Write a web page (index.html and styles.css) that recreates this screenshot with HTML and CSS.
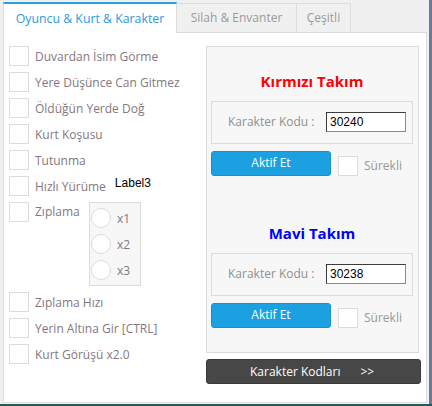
FILE: index.html
```html
<!DOCTYPE html>
<html lang="tr">
<head>
<meta charset="utf-8">
<link rel="stylesheet" href="styles.css">
</head>
<body>
<div class="window">
  <div class="tabs">
    <div class="tab active">Oyuncu &amp; Kurt &amp; Karakter</div>
    <div class="tab t2">Silah &amp; Envanter</div>
    <div class="tab t3">Çeşitli</div>
  </div>
  <div class="panel">
    <div class="left">
      <div class="row"><span class="cb"></span><span class="lbl">Duvardan İsim Görme</span></div>
      <div class="row"><span class="cb"></span><span class="lbl">Yere Düşünce Can Gitmez</span></div>
      <div class="row"><span class="cb"></span><span class="lbl">Öldüğün Yerde Doğ</span></div>
      <div class="row"><span class="cb"></span><span class="lbl">Kurt Koşusu</span></div>
      <div class="row"><span class="cb"></span><span class="lbl">Tutunma</span></div>
      <div class="row"><span class="cb"></span><span class="lbl">Hızlı Yürüme</span><span class="label3">Label3</span></div>
      <div class="row top">
        <span class="cb"></span><span class="lbl zip">Zıplama</span>
        <div class="radios">
          <div class="radio-row"><span class="rb"></span><span class="rl">x1</span></div>
          <div class="radio-row"><span class="rb"></span><span class="rl">x2</span></div>
          <div class="radio-row"><span class="rb"></span><span class="rl">x3</span></div>
        </div>
      </div>
      <div class="row"><span class="cb"></span><span class="lbl">Zıplama Hızı</span></div>
      <div class="row"><span class="cb"></span><span class="lbl">Yerin Altına Gir [CTRL]</span></div>
      <div class="row"><span class="cb"></span><span class="lbl">Kurt Görüşü x2.0</span></div>
    </div>
    <div class="right">
      <div class="teams">
        <div class="title red">Kırmızı Takım</div>
        <div class="code-box"><span class="code-lbl">Karakter Kodu :</span><span class="input">30240</span></div>
        <div class="act-row"><span class="btn">Aktif Et</span><span class="cb small"></span><span class="lbl">Sürekli</span></div>
        <div class="title blue second">Mavi Takım</div>
        <div class="code-box"><span class="code-lbl">Karakter Kodu :</span><span class="input">30238</span></div>
        <div class="act-row"><span class="btn">Aktif Et</span><span class="cb small"></span><span class="lbl">Sürekli</span></div>
      </div>
      <div class="dark-btn"><span>Karakter Kodları</span><span class="arr">&gt;&gt;</span></div>
    </div>
  </div>
</div>
</body>
</html>
```

FILE: styles.css
```css
* { box-sizing: border-box; }
html, body { margin: 0; padding: 0; }
body {
  background: #2a5858;
  font-family: "Open Sans", "DejaVu Sans", sans-serif;
  width: 432px;
  height: 406px;
  overflow: hidden;
}
.window {
  width: 432px;
  height: 404px;
  background: #f0f0f0;
  border-right: 3px solid #6b7a98;
  padding: 2px 0 0 3px;
}
.tabs {
  display: flex;
  align-items: flex-end;
  height: 30px;
}
.tab {
  height: 29px;
  display: flex;
  align-items: center;
  justify-content: center;
  font-size: 12px;
  color: #9a9a9a;
  background: #f0f0f0;
  border: 1px solid #dcdcdc;
  border-bottom: none;
  padding-bottom: 1px;
}
.tab.active {
  width: 174px;
  height: 31px;
  margin-bottom: -1px;
  background: #fff;
  color: #2a9be0;
  font-size: 12.3px;
  border: 1px solid #dcdcdc;
  border-top: 2px solid #2a9fe0;
  border-bottom: none;
  position: relative;
  z-index: 1;
}
.tab.t2 { width: 120px; border-left: none; }
.tab.t3 { width: 54px; border-left: none; }
.panel {
  width: 424px;
  height: 371px;
  background: #fff;
  border: 1px solid #dcdcdc;
  display: flex;
  padding: 13px 0 0 5px;
}
.left {
  width: 197px;
  display: flex;
  flex-direction: column;
  gap: 6px;
}
.row {
  display: flex;
  align-items: center;
  height: 20px;
}
.row.top {
  align-items: flex-start;
  height: auto;
}
.row.top .lbl { line-height: 20px; }
.cb {
  width: 20px;
  height: 20px;
  flex: none;
  background: #fff;
  border: 1px solid #dcdcdc;
}
.lbl {
  margin-left: 6px;
  font-size: 12px;
  color: #857780;
  white-space: nowrap;
}
.lbl.zip { width: 48px; }
.label3 {
  font-family: "Liberation Sans", Arial, sans-serif;
  font-size: 12px;
  color: #000;
  margin-left: 9px;
  align-self: flex-start;
  margin-top: 0;
}
.radios {
  margin-left: 6px;
  width: 52px;
  height: 84px;
  background: #f7f7f7;
  border: 1px solid #dcdcdc;
  padding: 5px 0 0 1px;
  display: flex;
  flex-direction: column;
  gap: 6px;
}
.radio-row {
  display: flex;
  align-items: center;
  height: 20px;
}
.rb {
  width: 20px;
  height: 20px;
  border-radius: 50%;
  background: #fff;
  border: 1px solid #dcdcdc;
}
.rl {
  margin-left: 6px;
  font-size: 12px;
  color: #857780;
}
.right {
  width: 215px;
  display: flex;
  flex-direction: column;
}
.teams {
  width: 213px;
  height: 307px;
  background: #f7f7f7;
  border: 1px solid #dcdcdc;
  padding: 24px 5px 0 4px;
  display: flex;
  flex-direction: column;
}
.title {
  height: 20px;
  line-height: 20px;
  text-align: center;
  font-weight: 700;
  font-size: 15px;
  margin-bottom: 10px;
}
.title.red { color: #ff0000; }
.title.blue { color: #0000ff; }
.title.second { margin-top: 47px; }
.code-box {
  height: 43px;
  border: 1px solid #dcdcdc;
  display: flex;
  align-items: flex-start;
  padding: 10px 0 0 16px;
}
.code-lbl {
  font-size: 12px;
  color: #8f8f8f;
  line-height: 20px;
  width: 98px;
  white-space: nowrap;
}
.input {
  width: 80px;
  height: 20px;
  background: #fff;
  border: 1px solid #3c3c3c;
  border-right-color: #8a8a8a;
  border-bottom-color: #8a8a8a;
  font-family: "Liberation Sans", Arial, sans-serif;
  font-size: 12px;
  color: #000;
  line-height: 18px;
  padding-left: 3px;
}
.act-row {
  display: flex;
  align-items: center;
  margin-top: 7px;
  height: 25px;
}
.btn {
  width: 120px;
  height: 25px;
  background: #1ba1e2;
  border: 1px solid #1890cc;
  border-radius: 3px;
  color: #fff;
  font-size: 12px;
  display: flex;
  align-items: center;
  justify-content: center;
  padding-bottom: 2px;
}
.cb.small { margin-left: 7px; margin-top: 4px; }
.act-row .lbl { margin-top: 4px; color: #999; }
.dark-btn {
  margin-top: 6px;
  width: 215px;
  height: 25px;
  background: #474747;
  border: 1px solid #3a3a3a;
  border-radius: 3px;
  color: #fff;
  font-size: 12px;
  display: flex;
  align-items: center;
  padding: 0 0 1px 43px;
}
.arr { margin-left: 20px; }
```
